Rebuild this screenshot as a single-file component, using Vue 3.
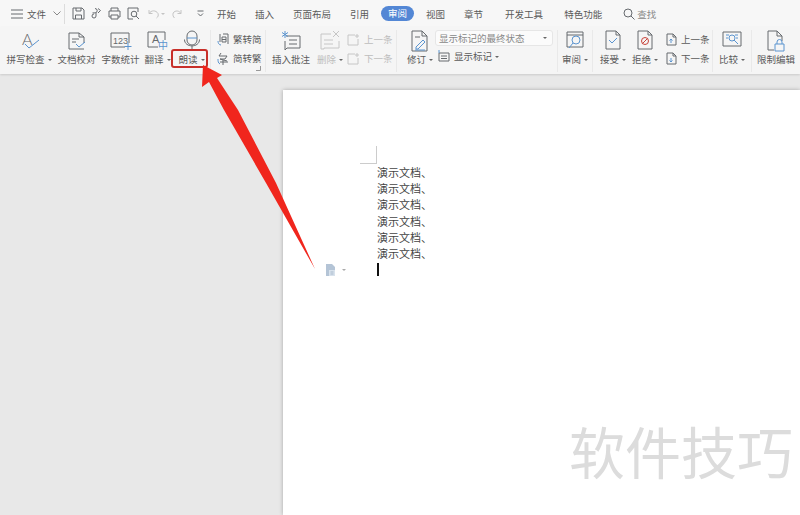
<template>
  <div class="app">
    <header class="topbar">
      <div class="file-menu">
        <svg class="menu-icon" width="12" height="10" viewBox="0 0 12 10"><path d="M0 1h12M0 5h12M0 9h12" /></svg>
        <span>文件</span>
        <svg class="chev" width="8" height="5" viewBox="0 0 8 5"><path d="M.5.5 4 4 7.500.5" /></svg>
      </div>
      <div class="quick">
        <svg width="13" height="13" viewBox="0 0 13 13"><path d="M1 1h9l2 2v9H1zM4 1v3h5V1M3.500 12V8h6v4" /></svg>
        <svg width="11" height="13" viewBox="0 0 11 13"><path d="M4 1.500a2.200 2.200 0 1 1 0 4.400H1.500M7 1.500l2.500 2-2.500 2.500M5 6v3a2 2 0 1 1-2-2" /></svg>
        <svg width="13" height="13" viewBox="0 0 13 13"><path d="M3 4V1h7v3M3 10H1V4h11v6h-2M3 8h7v4H3z" /></svg>
        <svg width="13" height="13" viewBox="0 0 13 13"><path d="M11 5V1H1v11h5" /><circle cx="7" cy="7" r="2.800" /><path d="m9 9 3 3" /></svg>
        <svg class="undo" width="11" height="10" viewBox="0 0 11 10"><path d="M1 1v3.500h3.500M1.200 4.500C3 1 8 1 10 4.500c.7 2 0 3.500-1.500 4.500" /></svg>
        <span class="caret faded-caret"></span>
        <svg class="redo" width="10" height="10" viewBox="0 0 10 10"><path d="M9 1v3.500H5.500M8.800 4.500C7.500 1.500 3 1 1.200 4c-.7 2 0 3.800 1.300 5" /></svg>
        <svg class="more" width="7" height="7" viewBox="0 0 7 7"><path d="M.5 1h6M1 3.500l2.500 2.500L6 3.500" /></svg>
      </div>
      <nav class="tabs">
        <span>开始</span>
        <span>插入</span>
        <span>页面布局</span>
        <span>引用</span>
        <span class="active">审阅</span>
        <span>视图</span>
        <span>章节</span>
        <span class="tab-dev">开发工具</span>
        <span class="tab-special">特色功能</span>
      </nav>
      <div class="search">
        <svg width="12" height="12" viewBox="0 0 12 12"><circle cx="5" cy="5" r="4" /><path d="m8 8 3.500 3.500" /></svg>
        <span>查找</span>
      </div>
    </header>

    <section class="ribbon">
      <div class="group g-proof">
        <div class="item w-48">
          <svg width="24" height="22" viewBox="0 0 24 22">
            <text x="5" y="15" class="svg-letter thin" font-size="16">A</text>
            <path class="blue" d="m8 14 4 4 10-8" />
          </svg>
          <span class="label">拼写检查<i class="caret"></i></span>
        </div>
        <div class="item w-47">
          <svg width="20" height="22" viewBox="0 0 20 22">
            <path d="M2 3h10l5 4v6M17 19H2V3M12 3v4h5M5 9h7M5 12h4" />
            <path class="blue" d="m9 14 3 3 6-5" />
          </svg>
          <span class="label">文档校对</span>
        </div>
        <div class="item w-41">
          <svg width="22" height="22" viewBox="0 0 22 22">
            <path d="M15 17H1V3h18v10" />
            <text x="3" y="14" class="svg-letter" font-size="9">123</text>
            <path class="blue" d="M18 13v7M14.500 16.500h7" />
          </svg>
          <span class="label">字数统计</span>
        </div>
        <div class="item w-33">
          <svg width="22" height="22" viewBox="0 0 22 22">
            <path d="M11 17H1V2h17v8" />
            <text x="5" y="13" class="svg-letter" font-size="11">A</text>
            <text x="11" y="19" class="svg-blue" font-size="10">中</text>
          </svg>
          <span class="label">翻译<i class="caret"></i></span>
        </div>
        <div class="item w-35">
          <svg width="18" height="22" viewBox="0 0 18 22">
            <rect x="4" y="1" width="10" height="14" rx="5" />
            <path class="blue" d="M4 8h10" />
            <path d="M1.500 9.500c0 8.500 15 8.500 15 0M9 16v3" />
          </svg>
          <span class="label">朗读<i class="caret"></i></span>
        </div>
      </div>

      <div class="group g-convert">
        <div class="stack">
          <div class="row">
            <svg width="12" height="13" viewBox="0 0 12 13">
              <path d="M3 1v8M6 1h5v10M5 4h4v5H5zM5 6.500h4" />
              <path class="blue" d="M1 8c0 2 1 4 3 4" />
            </svg>
            <span>繁转简</span>
          </div>
          <div class="row">
            <svg width="12" height="13" viewBox="0 0 12 13">
              <path d="M4 1 2 4h8L8 7H3l7 2M3 10h8M6 8v5" />
              <path class="blue" d="M1 7c0 2 0 4 2 5" />
            </svg>
            <span>简转繁</span>
          </div>
        </div>
        <svg class="launcher" width="5" height="5" viewBox="0 0 5 5"><path d="M4.500 0v4.500H0" /></svg>
      </div>

      <div class="group g-comment">
        <div class="item w-50">
          <svg width="20" height="22" viewBox="0 0 20 22">
            <path d="M5 6h14v12H6l-2 2v-9M8 10h8M8 14h8" />
            <path class="blue" d="M4 1v7M1 2.500l6 4M7 2.500l-6 4" />
          </svg>
          <span class="label">插入批注</span>
        </div>
        <div class="item w-28 disabled">
          <svg width="20" height="22" viewBox="0 0 20 22">
            <path d="M11 4H1v15h3v-1h15v-7M4 10h9M4 14h9M13 1l6 6M19 1l-6 6" />
          </svg>
          <span class="label">删除<i class="caret"></i></span>
        </div>
        <div class="stack nav-stack disabled">
          <div class="row">
            <svg width="13" height="13" viewBox="0 0 13 13"><path d="M8 2H1v10h10V6M10 1v4M8 3h4" /></svg>
            <span>上一条</span>
          </div>
          <div class="row">
            <svg width="13" height="13" viewBox="0 0 13 13"><path d="M8 2H1v10h10V6M10 1v4M8 3h4" /></svg>
            <span>下一条</span>
          </div>
        </div>
      </div>

      <div class="group g-track">
        <div class="item w-46">
          <svg width="18" height="22" viewBox="0 0 18 22">
            <path d="M1 1h10l5 5v15H1zM11 1v5h5M4 7h5" />
            <path class="blue" d="m5 17 7-7 2 2-7 7H5zM4 20h10" />
          </svg>
          <span class="label">修订<i class="caret"></i></span>
        </div>
        <div class="markup">
          <div class="select">显示标记的最终状态<i class="caret"></i></div>
          <div class="row markup-row">
            <svg width="12" height="12" viewBox="0 0 12 12">
              <path d="M1 3h10v8H1zM3 6h6M3 8.500h6" />
              <path class="blue" d="M1 0v3" />
            </svg>
            <span>显示标记<i class="caret"></i></span>
          </div>
        </div>
      </div>

      <div class="group g-review">
        <div class="item w-full">
          <svg width="18" height="22" viewBox="0 0 18 22">
            <path d="M1 2h16v15H1zM1 5h16" />
            <circle class="blue" cx="10" cy="10" r="4" />
            <path class="blue" d="m7 13-4 5" />
          </svg>
          <span class="label">审阅<i class="caret"></i></span>
        </div>
      </div>

      <div class="group g-accept">
        <div class="item w-32">
          <svg width="16" height="22" viewBox="0 0 16 22">
            <path d="M1 1h10l4 4v14H1zM11 1v4h4" />
            <path class="blue" d="m4 10 3 3 5-5" />
          </svg>
          <span class="label">接受<i class="caret"></i></span>
        </div>
        <div class="item w-32">
          <svg width="16" height="22" viewBox="0 0 16 22">
            <path d="M1 1h10l4 4v14H1zM11 1v4h4" />
            <circle class="red" cx="8" cy="11" r="3.500" />
            <path class="red" d="m5.500 13.500 5-5" />
          </svg>
          <span class="label">拒绝<i class="caret"></i></span>
        </div>
        <div class="stack accept-stack">
          <div class="row">
            <svg width="11" height="13" viewBox="0 0 11 13">
              <path d="M1 1h6l3 3v8H1zM7 1v3h3" />
              <path class="blue" d="M5 10V6M3.500 7.500 5 6l1.500 1.500" />
            </svg>
            <span>上一条</span>
          </div>
          <div class="row">
            <svg width="11" height="13" viewBox="0 0 11 13">
              <path d="M1 1h6l3 3v8H1zM7 1v3h3" />
              <path class="blue" d="M5 6v4M3.500 8.500 5 10l1.500-1.500" />
            </svg>
            <span>下一条</span>
          </div>
        </div>
      </div>

      <div class="group g-compare">
        <div class="item w-full">
          <svg width="20" height="22" viewBox="0 0 20 22">
            <path d="M1 2h18v14H1z" />
            <path class="blue" d="M4 5h3M13 5h3M4 8h2M14 8h2" />
            <circle class="blue" cx="10" cy="8" r="3" />
            <path class="blue" d="m12 10 4 4" />
          </svg>
          <span class="label">比较<i class="caret"></i></span>
        </div>
      </div>

      <div class="group g-protect">
        <div class="item w-full">
          <svg width="20" height="22" viewBox="0 0 20 22">
            <path d="M8 20H2V1h9l5 5v5M11 1v5h5" />
            <path d="M9 14h9v7H9zM11 14v-2a2.500 2.500 0 0 1 5 0v2" class="blue" />
          </svg>
          <span class="label">限制编辑</span>
        </div>
      </div>
    </section>

    <main class="workspace">
      <div class="page">
        <div class="margin-mark"></div>
        <p v-for="n in 6" :key="n" class="doc-line">演示文档、</p>
        <div class="cursor"></div>
      </div>

      <div class="paste-tag">
        <svg width="10" height="12" viewBox="0 0 10 12">
          <path d="M0 0h6l3 3v9H0z" fill="#b4c4d6" />
          <path d="M3 6h6v6H3z" fill="#d8e2ec" />
          <path d="M4.500 8h3M4.500 10h3" stroke="#a9bacd" />
        </svg>
        <i class="caret"></i>
      </div>
      <div class="watermark">软件技巧</div>
    </main>

    <div class="highlight"></div>
    <svg class="arrow" width="800" height="515" viewBox="0 0 800 515">
      <path d="M203 65 222 75 217 78 238 110 276 183 315 269 266 183 224 110 209 82 202 87z" />
    </svg>
  </div>
</template>

<script setup>
</script>

<style>
html,
body {
  margin: 0;
  background: #e8e8e8;
}
</style>

<style scoped>
.app {
  position: relative;
  width: 800px;
  height: 515px;
  overflow: hidden;
  display: flex;
  flex-direction: column;
  background: #e8e8e8;
  color: #5a5a5a;
  font-family: "Noto Sans CJK SC", "Liberation Sans", sans-serif;
  font-size: 9.5px;
}

svg {
  flex: none;
  display: block;
  fill: none;
  stroke: #666a6e;
  stroke-width: 1;
  overflow: visible;
}

.blue {
  stroke: #5b94cf;
}

.red {
  stroke: #c8433a;
}

.svg-letter,
.svg-blue {
  stroke: none;
  font-family: "Liberation Sans", sans-serif;
}

.svg-letter {
  fill: #666a6e;
}

.thin {
  font-family: Lato, "Liberation Sans", sans-serif;
  font-weight: 300;
}

.svg-blue {
  fill: #5b94cf;
  font-family: "Noto Sans CJK SC", sans-serif;
}

.caret {
  display: inline-block;
  width: 0;
  height: 0;
  margin-left: 3px;
  vertical-align: middle;
  border-top: 2px solid #666;
  border-left: 2px solid transparent;
  border-right: 2px solid transparent;
}

/* title row */
.topbar {
  height: 27px;
  display: flex;
  align-items: center;
  background: #f7f7f7;
}

.file-menu {
  width: 65px;
  height: 20px;
  display: flex;
  align-items: center;
  box-sizing: border-box;
  padding-left: 11px;
  border-right: 1px solid #dcdcdc;
}

.menu-icon {
  margin-right: 4px;
}

.chev {
  margin-left: 7px;
  stroke: #888;
}

.quick {
  width: 152px;
  display: flex;
  align-items: center;
  padding-left: 7px;
  box-sizing: border-box;
  gap: 6px;
}

.undo,
.redo {
  stroke: #c4c4c4;
}

.undo {
  margin-left: 2px;
}

.faded-caret {
  margin-left: -4px;
  border-top-color: #c4c4c4;
}

.redo {
  margin-left: 1px;
}

.more {
  margin-left: 9px;
}

.tabs {
  display: flex;
  align-items: center;
  gap: 19px;
  font-size: 9.5px;
}

.tabs .active {
  margin: 0 -7px;
  padding: 0 7px;
  line-height: 15px;
  border-radius: 8px;
  background: #5387d5;
  color: #fff;
}

.tab-dev {
  margin-left: 3px;
}

.tab-special {
  margin-left: 2px;
}

.search {
  display: flex;
  align-items: center;
  gap: 2px;
  margin-left: 21px;
  color: #888;
}

/* ribbon */
.ribbon {
  height: 47px;
  display: flex;
  box-sizing: border-box;
  padding-top: 3px;
  background: #f5f5f5;
  box-shadow: 0 1px 2px rgba(0, 0, 0, 0.12);
  position: relative;
}

.group {
  position: relative;
  display: flex;
  box-sizing: border-box;
  height: 42px;
  border-right: 1px solid #e9e9e9;
}

.g-proof {
  width: 211px;
  padding-left: 5px;
}

.g-convert {
  width: 55px;
  padding-left: 6px;
}

.g-comment {
  width: 131px;
}

.g-track {
  width: 161px;
}

.g-review {
  width: 35px;
}

.g-accept {
  width: 120px;
  padding-left: 4px;
}

.g-compare {
  width: 39px;
}

.g-protect {
  width: 48px;
  border-right: none;
}

.item {
  display: flex;
  flex-direction: column;
  align-items: center;
  justify-content: flex-end;
  height: 36px;
  flex: none;
}

.label {
  line-height: 14px;
  white-space: nowrap;
}

.w-50 { width: 50px; }
.w-48 { width: 48px; }
.w-47 { width: 47px; }
.w-46 { width: 46px; }
.w-41 { width: 41px; }
.w-35 { width: 35px; }
.w-33 { width: 33px; }
.w-32 { width: 32px; }
.w-28 { width: 28px; }
.w-full { width: 100%; }

.stack {
  display: flex;
  flex-direction: column;
  gap: 3px;
  padding-top: 1px;
}

.row {
  display: flex;
  align-items: center;
  gap: 4px;
  height: 16px;
  white-space: nowrap;
}

.nav-stack {
  margin-left: 3px;
}

.accept-stack {
  margin-left: 5px;
}

.disabled {
  color: #bdbdbd;
}

.disabled svg {
  stroke: #c6c6c6;
}

.launcher {
  position: absolute;
  right: 4px;
  bottom: 1px;
  stroke: #999;
}

.markup {
  margin-left: -8px;
  width: 118px;
}

.select {
  height: 16px;
  display: flex;
  align-items: center;
  justify-content: space-between;
  box-sizing: border-box;
  padding: 0 5px 0 3px;
  background: #fbfbfb;
  border: 1px solid #e6e6e6;
  border-radius: 3px;
  color: #888;
}

.markup-row {
  margin: 2px 0 0 3px;
}

/* document area */
.workspace {
  position: relative;
  flex: 1;
  display: flex;
  padding: 16px 0 0 283px;
}

.page {
  flex: 1;
  box-sizing: border-box;
  padding: 56px 0 0 94px;
  background: #fff;
  box-shadow: 0 0 4px rgba(0, 0, 0, 0.28);
}

.margin-mark {
  width: 17px;
  height: 18px;
  margin-left: -17px;
  box-sizing: border-box;
  border-right: 1px solid #ccc;
  border-bottom: 1px solid #ccc;
}

.doc-line {
  margin: 0;
  height: 16.200px;
  line-height: 16.200px;
  font-size: 11px;
  color: #444;
}

.cursor {
  width: 1.500px;
  height: 13px;
  margin-top: 2px;
  background: #111;
}

.paste-tag {
  position: absolute;
  left: 326px;
  top: 190px;
  display: flex;
  align-items: center;
}

.paste-tag svg {
  stroke: none;
}

.paste-tag .caret {
  margin-left: 6px;
  border-top-color: #aaa;
}

.watermark {
  position: absolute;
  right: 7px;
  top: 338px;
  font-size: 56px;
  line-height: 76px;
  color: #dcdcdc;
  white-space: nowrap;
}

/* annotation drawn over the screenshot */
.highlight {
  position: absolute;
  left: 171px;
  top: 49px;
  width: 37px;
  height: 19px;
  box-sizing: border-box;
  border: 2.500px solid #c8302a;
  border-radius: 3px;
}

.arrow {
  position: absolute;
  left: 0;
  top: 0;
  stroke: none;
  fill: #f0261d;
  pointer-events: none;
}
</style>
